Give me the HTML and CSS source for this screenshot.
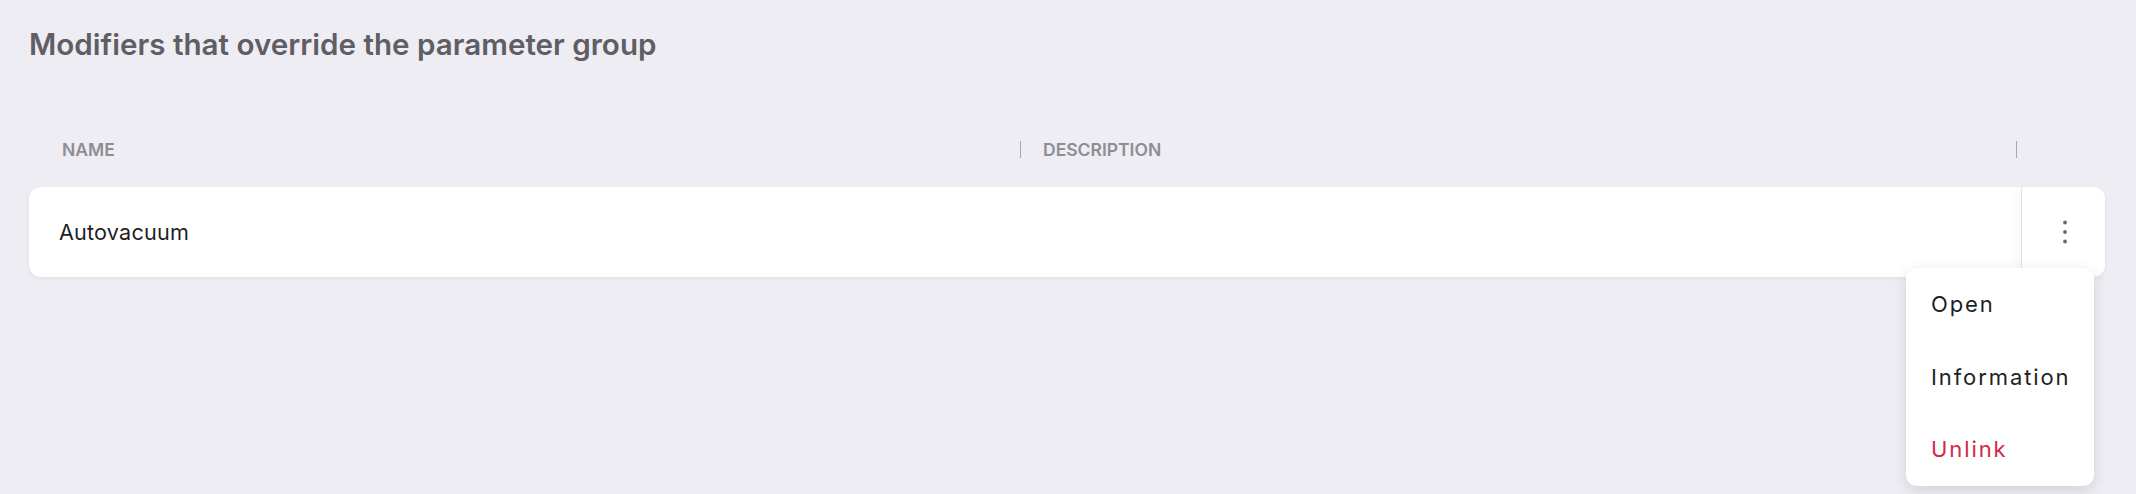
FILE: index.html
```html
<!DOCTYPE html>
<html lang="en">
<head>
    <meta charset="UTF-8">
    <title>Modifiers</title>
    <link rel="stylesheet" href="styles.css">
</head>
<body>
    <div class="page">
        <h1 class="page-title">Modifiers that override the parameter group</h1>

        <div class="table">
            <div class="table-head">
                <div class="head-cell">Name</div>
                <div class="head-cell">Description</div>
                <div class="head-cell head-actions"></div>
            </div>

            <div class="row-wrap">
                <div class="table-row">
                    <div class="cell cell-name">Autovacuum</div>
                    <div class="cell cell-desc"></div>
                    <div class="cell cell-actions">
                        <button class="kebab" aria-label="More">
                            <svg width="6" height="26" viewBox="0 0 6 26">
                                <circle cx="3" cy="3.5" r="1.9" />
                                <circle cx="3" cy="13" r="1.9" />
                                <circle cx="3" cy="22.5" r="1.9" />
                            </svg>
                        </button>
                    </div>
                </div>

                <ul class="menu">
                    <li class="menu-item">Open</li>
                    <li class="menu-item">Information</li>
                    <li class="menu-item danger">Unlink</li>
                </ul>
            </div>
        </div>
    </div>
</body>
</html>
```

FILE: styles.css
```css
:root {
    --bg: #eeedf3;
    --title-color: #5f5e65;
    --head-color: #8e8d93;
    --text-color: #1f1f23;
    --danger: #d2294a;
    --divider: #e3e3e6;
}

* {
    box-sizing: border-box;
}

html, body {
    height: 100%;
}

body {
    margin: 0;
    background: var(--bg);
    font-family: 'Inter', 'Liberation Sans', sans-serif;
    color: var(--text-color);
}

.page {
    min-height: 100%;
    padding: 26px 31px 0 29px;
}

.page-title {
    margin: 0;
    font-size: 29.6px;
    line-height: 36px;
    font-weight: 600;
    color: var(--title-color);
}

.table {
    margin-top: 68px;
}

.table-head {
    display: grid;
    grid-template-columns: 992px 996px 1fr;
    height: 40px;
    align-items: center;
}

.head-cell {
    position: relative;
    font-size: 17.5px;
    line-height: 20px;
    font-weight: 600;
    text-transform: uppercase;
    color: var(--head-color);
    padding-left: 33px;
}

.head-cell + .head-cell {
    padding-left: 22px;
}

.head-cell:not(.head-actions)::after {
    content: "";
    position: absolute;
    right: 0;
    top: 1px;
    width: 1px;
    height: 17px;
    background: #a8a7ad;
}

.row-wrap {
    position: relative;
    margin-top: 17px;
}

.table-row {
    display: grid;
    grid-template-columns: 992px 1fr 84px;
    height: 90px;
    background: #fff;
    border-radius: 12px;
    box-shadow: 0 2px 4px rgba(40, 40, 70, 0.06);
}

.cell {
    display: flex;
    align-items: center;
}

.cell-name {
    padding-left: 30px;
    font-size: 21.6px;
    letter-spacing: 0.2px;
}

.cell-actions {
    justify-content: center;
    border-left: 1px solid var(--divider);
    box-shadow: -6px 0 10px rgba(0, 0, 0, 0.025);
    border-radius: 0 12px 12px 0;
}

.kebab {
    background: none;
    border: none;
    padding: 0;
    margin-left: 3px;
    display: flex;
    cursor: pointer;
}

.kebab svg {
    fill: #6a6a70;
}

.menu {
    position: absolute;
    top: 81px;
    right: 11px;
    width: 188px;
    margin: 0;
    padding: 0;
    list-style: none;
    background: #fff;
    border-radius: 11px;
    box-shadow: 0 4px 14px rgba(60, 60, 90, 0.16);
    z-index: 10;
}

.menu-item {
    height: 72.5px;
    display: flex;
    align-items: center;
    padding-left: 25px;
    font-size: 22px;
    letter-spacing: 1.9px;
    color: var(--text-color);
    cursor: pointer;
}

.menu-item.danger {
    color: var(--danger);
}
```
